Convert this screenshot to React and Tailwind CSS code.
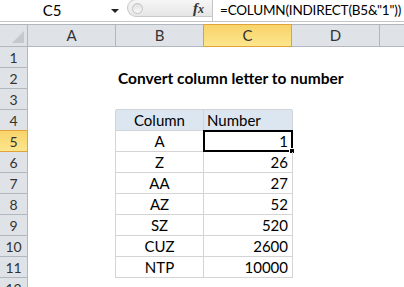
import React from 'react'

const cols = ['A', 'B', 'C', 'D']

const data = [
  ['A', '1'],
  ['Z', '26'],
  ['AA', '27'],
  ['AZ', '52'],
  ['SZ', '520'],
  ['CUZ', '2600'],
  ['NTP', '10000'],
]

function RowHead({ n, active, above }) {
  let cls = 'w-[28px] h-[21px] shrink-0 flex items-center justify-center border-r border-b text-[14px] text-[#333] '
  if (active) cls += 'bg-linear-to-b from-[#f8d36a] to-[#fde68c] border-[#e2a23a]'
  else if (above) cls += 'bg-[#dfe3e8] border-r-[#b1b7bf] border-b-[#e2a23a]'
  else cls += 'bg-[#dfe3e8] border-[#b1b7bf]'
  return <div className={cls}>{n}</div>
}

function Row({ n, children }) {
  return (
    <div className="flex h-[21px]">
      <RowHead n={n} active={n === 5} above={n === 4} />
      {children}
    </div>
  )
}

function App() {
  return (
    <div className="w-[404px] h-[287px] overflow-hidden bg-white font-['Lato',sans-serif] text-black">
      {/* formula bar */}
      <div className="flex h-[22px] border-b border-[#c4c4c4]">
        <div className="w-[127px] shrink-0 flex items-center">
          <span className="w-[104px] text-center text-[15px] leading-none">C5</span>
          <svg width="8" height="5" viewBox="0 0 8 5" className="ml-[7px] mt-[2px]">
            <path d="M0 0 L8 0 L4 4 Z" fill="#222" />
          </svg>
        </div>
        <div className="w-[85px] shrink-0 h-[18px] -mt-px flex items-center rounded-l-[10px] border border-r-0 border-[#c9c9c9] bg-linear-to-b from-[#f6f6f6] to-[#e6e6e6]">
          <div className="ml-[4px] w-[11px] h-[11px] rounded-full border border-[#c2c2c2] bg-linear-to-b from-[#e0e0e0] to-[#f8f8f8]" />
          <span className="ml-auto mr-[8px] font-['Liberation_Serif',serif] italic font-bold text-[15px] text-[#333] leading-none">
            f<span className="text-[12px]">x</span>
          </span>
        </div>
        <div className="flex-1 min-w-0 flex items-center border-l border-[#c4c4c4] pl-[7px] whitespace-nowrap text-[13.5px] tracking-[-0.2px]">
          =COLUMN(INDIRECT(B5&amp;"1"))
        </div>
      </div>
      <div className="h-[2px]" />

      {/* column headers */}
      <div className="flex h-[23px]">
        <div className="w-[28px] shrink-0 border-t border-b border-r border-[#b1b7bf] bg-[#dfe3e8] flex items-end justify-end pr-[3px] pb-[3px]">
          <svg width="12" height="12" viewBox="0 0 12 12">
            <path d="M12 0 L12 12 L0 12 Z" fill="#c4c9cf" />
          </svg>
        </div>
        {cols.map((c) => (
          <div
            key={c}
            className={
              c === 'C'
                ? 'w-[88px] shrink-0 flex items-center justify-center border-t border-b border-r border-[#e2a23a] bg-linear-to-b from-[#f8d36a] to-[#fde68c] text-[15px] text-[#333]'
                : c === 'B'
                ? 'w-[88px] shrink-0 flex items-center justify-center border-t border-b border-r border-[#b1b7bf] border-r-[#e2a23a] bg-[#dfe3e8] text-[15px] text-[#333]'
                : 'w-[88px] shrink-0 flex items-center justify-center border-t border-b border-r border-[#b1b7bf] bg-[#dfe3e8] text-[15px] text-[#333]'
            }
          >
            {c}
          </div>
        ))}
        <div className="flex-1 border-t border-b border-[#b1b7bf] bg-[#dfe3e8]" />
      </div>

      {/* grid */}
      <Row n={1} />
      <Row n={2}>
        <div className="w-[88px] shrink-0" />
        <div className="pl-[2px] flex items-center whitespace-nowrap font-bold text-[15.5px]">
          Convert column letter to number
        </div>
      </Row>
      <Row n={3}>
        <div className="w-[88px] shrink-0" />
        <div className="w-[88px] shrink-0 border-b border-[#d4d4d4]" />
        <div className="w-[88px] shrink-0 border-b border-[#d4d4d4]" />
      </Row>
      <Row n={4}>
        <div className="w-[88px] shrink-0 border-r border-[#d4d4d4]" />
        <div className="w-[88px] shrink-0 border-r border-b border-[#d4d4d4] bg-[#dce6f1] flex items-center justify-center text-[15px]">
          Column
        </div>
        <div className="w-[89px] shrink-0 border-r border-b border-[#d4d4d4] bg-[#dce6f1] flex items-center pl-[3px] text-[15px]">
          Number
        </div>
      </Row>
      {data.map(([l, v], i) => (
        <Row key={l} n={i + 5}>
          <div className="w-[88px] shrink-0 border-r border-[#d4d4d4]" />
          <div className="w-[88px] shrink-0 border-r border-b border-[#d4d4d4] flex items-center justify-center text-[15px]">
            {l}
          </div>
          <div className="w-[89px] shrink-0 relative border-r border-b border-[#d4d4d4] flex items-center justify-end pr-[4px] text-[15px]">
            {v}
            {i === 0 && (
              <>
                <div className="absolute -left-px -top-px -right-px -bottom-px border-2 border-black" />
                <div className="absolute -right-[3px] -bottom-[3px] w-[6px] h-[6px] bg-black border border-white" />
              </>
            )}
          </div>
        </Row>
      ))}
      <Row n={12} />
    </div>
  )
}

export default App
